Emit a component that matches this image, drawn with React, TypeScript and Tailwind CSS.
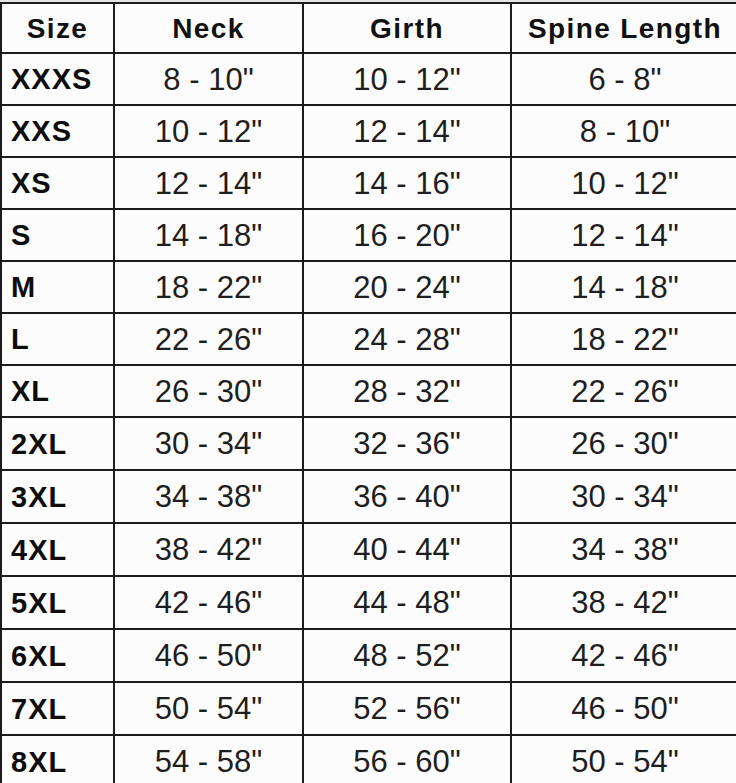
const rows: [string, string, string, string][] = [
  ["XXXS", '8 - 10"', '10 - 12"', '6 - 8"'],
  ["XXS", '10 - 12"', '12 - 14"', '8 - 10"'],
  ["XS", '12 - 14"', '14 - 16"', '10 - 12"'],
  ["S", '14 - 18"', '16 - 20"', '12 - 14"'],
  ["M", '18 - 22"', '20 - 24"', '14 - 18"'],
  ["L", '22 - 26"', '24 - 28"', '18 - 22"'],
  ["XL", '26 - 30"', '28 - 32"', '22 - 26"'],
  ["2XL", '30 - 34"', '32 - 36"', '26 - 30"'],
  ["3XL", '34 - 38"', '36 - 40"', '30 - 34"'],
  ["4XL", '38 - 42"', '40 - 44"', '34 - 38"'],
  ["5XL", '42 - 46"', '44 - 48"', '38 - 42"'],
  ["6XL", '46 - 50"', '48 - 52"', '42 - 46"'],
  ["7XL", '50 - 54"', '52 - 56"', '46 - 50"'],
  ["8XL", '54 - 58"', '56 - 60"', '50 - 54"'],
];

export default function App() {
  return (
    <div
      className="w-[736px] h-[783px] overflow-hidden bg-[#e6e6e6] pt-[2px]"
      style={{ fontFamily: '"Liberation Sans", Arial, sans-serif' }}
    >
      <table className="border-collapse bg-[#fcfcfc] table-fixed w-[738px]">
        <colgroup>
          <col className="w-[113px]" />
          <col className="w-[189px]" />
          <col className="w-[208px]" />
          <col className="w-[228px]" />
        </colgroup>
        <thead>
          <tr className="h-[50px]">
            {["Size", "Neck", "Girth", "Spine Length"].map((h) => (
              <th
                key={h}
                className="border-2 border-[#1c1c1c] text-center font-bold text-[28px] text-[#111] p-0 pt-[2px] tracking-[1.4px]"
              >
                {h}
              </th>
            ))}
          </tr>
        </thead>
        <tbody>
          {rows.map((r, idx) => (
            <tr key={r[0]} className={idx < 7 ? "h-[52px]" : "h-[53px]"}>
              <td className="border-2 border-[#1c1c1c] pl-[9px] pt-[2px] font-bold text-[29px] text-[#0d0d0d] p-0 tracking-[1px]">
                {r[0]}
              </td>
              {r.slice(1).map((v, i) => (
                <td
                  key={i}
                  className="border-2 border-[#1c1c1c] text-center pt-[2px] text-[31px] text-[#1e1e1e] p-0"
                >
                  {v}
                </td>
              ))}
            </tr>
          ))}
        </tbody>
      </table>
    </div>
  );
}
